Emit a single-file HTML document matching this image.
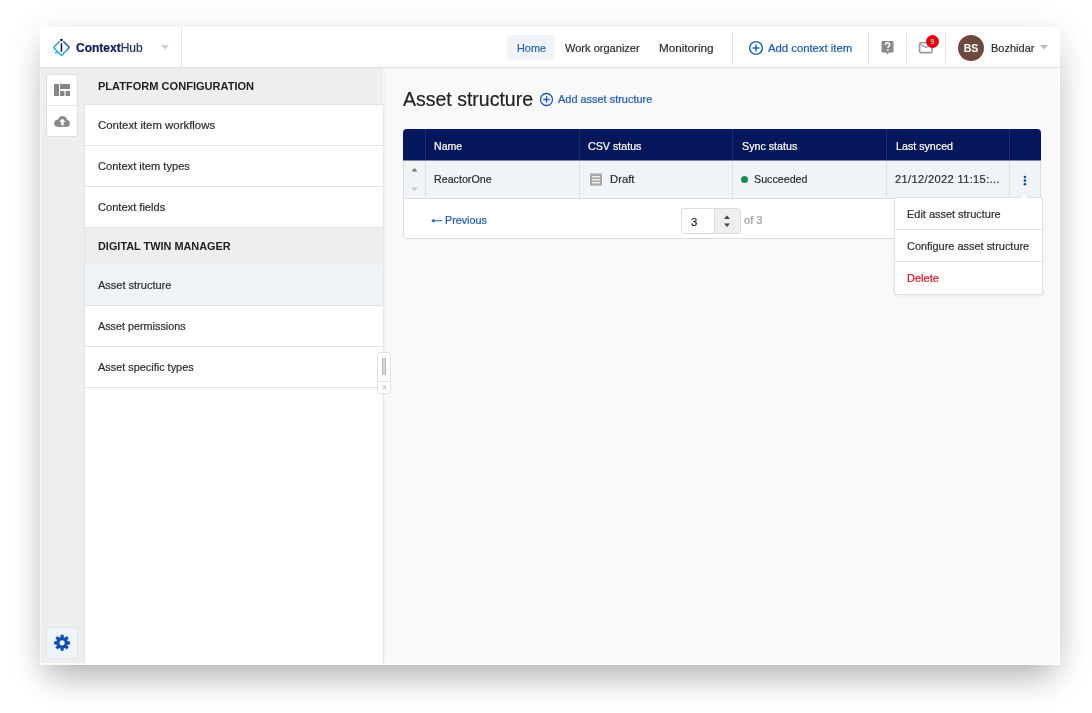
<!DOCTYPE html>
<html><head><meta charset="utf-8">
<style>
*{box-sizing:border-box;margin:0;padding:0}
html,body{width:1092px;height:713px;overflow:hidden;background:#fff;font-family:"Liberation Sans",sans-serif;color:#2a2d31}
.a{position:absolute}
.t{position:absolute;will-change:transform;-webkit-text-stroke:0.2px currentColor;white-space:nowrap;font-size:11.3px;line-height:14px}
.hl{position:absolute;height:1px;background:#e2e2e2}
.vl{position:absolute;width:1px;background:#e2e2e2}
</style></head><body>
<!-- window -->
<div class="a" style="left:40px;top:27px;width:1020px;height:638px;background:#f9f9f9;box-shadow:0 8px 32px rgba(0,0,0,0.15),0 22px 32px -10px rgba(0,0,0,0.2)"></div>

<!-- header -->
<div class="a" style="left:40px;top:27px;width:1020px;height:40px;background:#fff"></div>
<div class="hl" style="left:40px;top:67px;width:1020px;background:#e0e0e0"></div>
<div class="vl" style="left:181px;top:27px;height:40px"></div>

<!-- logo -->
<svg class="a" style="left:50px;top:36px" width="24" height="24" viewBox="0 0 24 24">
  <defs><linearGradient id="lg" x1="0.35" y1="0.75" x2="0.95" y2="0.15"><stop offset="0.35" stop-color="#1fa8e2"/><stop offset="1" stop-color="#1a3aa6"/></linearGradient></defs>
  <path d="M9.2 5.7 L4.2 10.7 Q3.45 11.45 4.2 12.2 L10.7 18.7 Q11.45 19.45 12.2 18.7 L18.7 12.2 Q19.45 11.45 18.7 10.7 L13.7 5.7" fill="none" stroke="url(#lg)" stroke-width="1.55" stroke-linecap="round" stroke-linejoin="round"/>
  <path d="M4.9 17.7 L5.9 15.2 L7.9 17.1 Z" fill="#1fa8e2"/>
  <rect x="10.7" y="7.2" width="1.5" height="8.6" fill="#130f4e"/>
  <circle cx="11.45" cy="4.0" r="1.35" fill="#130f4e"/>
</svg>
<div class="t" style="left:76px;top:41px;font-size:12px;color:#15195c;letter-spacing:0px"><b>Context</b><span style="color:#283070">Hub</span></div>
<svg class="a" style="left:161px;top:45px" width="8" height="5"><path d="M0 0 L8 0 L4 4.5 Z" fill="#d0d0d0"/></svg>

<!-- nav -->
<div class="a" style="left:507px;top:35px;width:48px;height:25px;background:#f0f4f9;border-radius:3px"></div>
<div class="t" style="left:516.5px;top:41px;color:#2062b8;font-size:10.9px">Home</div>
<div class="t" style="left:565px;top:41px;color:#2a2d31;font-size:11.05px">Work organizer</div>
<div class="t" style="left:659px;top:41px;color:#2a2d31;font-size:11.7px">Monitoring</div>
<div class="vl" style="left:732px;top:32px;height:31px"></div>
<svg class="a" style="left:748px;top:40px" width="16" height="16" viewBox="0 0 16 16"><circle cx="8" cy="8" r="6.4" fill="none" stroke="#1c5bb5" stroke-width="1.4"/><path d="M8 4.6V11.4M4.6 8H11.4" stroke="#1c5bb5" stroke-width="1.4"/></svg>
<div class="t" style="left:767.5px;top:41px;color:#1c5bb5;font-size:11.3px">Add context item</div>
<div class="vl" style="left:868px;top:32px;height:31px"></div>
<svg class="a" style="left:880px;top:40px" width="15" height="16" viewBox="0 0 15 16"><path d="M2.5 1 H12.5 Q13.5 1 13.5 2 V11.5 Q13.5 12.5 12.5 12.5 H9 L7.5 14.5 L6 12.5 H2.5 Q1.5 12.5 1.5 11.5 V2 Q1.5 1 2.5 1 Z" fill="#8a8a8a"/><path d="M5.4 4.9 Q5.4 2.7 7.5 2.7 Q9.6 2.7 9.6 4.7 Q9.6 5.9 8.4 6.5 Q7.9 6.9 7.9 7.9" fill="none" stroke="#fff" stroke-width="1.5"/><rect x="7" y="9.3" width="1.6" height="1.6" fill="#fff"/></svg>
<div class="vl" style="left:906px;top:32px;height:31px"></div>
<svg class="a" style="left:918px;top:41px" width="16" height="13" viewBox="0 0 16 13"><rect x="1.6" y="1.7" width="12.6" height="9.9" rx="1.3" fill="none" stroke="#979797" stroke-width="1.6"/><path d="M2.4 3.2 L7.9 6.6 L13.4 3.2" fill="none" stroke="#979797" stroke-width="1.3"/></svg>
<div class="a" style="left:926px;top:35px;width:13px;height:13px;border-radius:50%;background:#e3000f;color:#fff;font-size:7px;line-height:13px;text-align:center;will-change:transform">9</div>
<div class="vl" style="left:945px;top:32px;height:31px"></div>
<div class="a" style="left:958px;top:35px;width:26px;height:26px;border-radius:50%;background:#6e4a3e;color:#fff;font-size:10.6px;font-weight:bold;line-height:26px;text-align:center;will-change:transform">BS</div>
<div class="t" style="left:991px;top:41px;color:#2a2d31;font-size:11px">Bozhidar</div>
<svg class="a" style="left:1040px;top:45px" width="8" height="5"><path d="M0 0 L8 0 L4 4.5 Z" fill="#bdbdbd"/></svg>

<!-- icon sidebar -->
<div class="a" style="left:40px;top:68px;width:44px;height:597px;background:#eeeeee"></div>
<div class="a" style="left:46px;top:74px;width:32px;height:63px;background:#fff;border:1px solid #e0e0e0;border-radius:3px"></div>
<div class="hl" style="left:47px;top:105px;width:30px"></div>
<svg class="a" style="left:54px;top:84px" width="16" height="12" viewBox="0 0 16 12"><rect x="0" y="0" width="5" height="12" fill="#858585"/><rect x="6" y="0" width="10" height="5" fill="#858585"/><rect x="6" y="7" width="4.4" height="5" fill="#858585"/><rect x="11.6" y="7" width="4.4" height="5" fill="#858585"/></svg>
<svg class="a" style="left:53px;top:114px" width="18" height="14" viewBox="0 0 18 14"><g fill="#8a8a8a"><circle cx="9.5" cy="6.7" r="4.7"/><circle cx="4.7" cy="9.3" r="3.5"/><circle cx="13.4" cy="9.4" r="3.45"/><rect x="4.7" y="8" width="8.7" height="4.85"/></g><path d="M9.35 4.5 L12.6 8.1 H10.65 V11.2 H8.05 V8.1 H6.1 Z" fill="#fff"/></svg>
<div class="a" style="left:46px;top:627px;width:32px;height:32px;background:#eef4f9;border:1px solid #e2e6ea;border-radius:3px"></div>
<svg class="a" style="left:52px;top:633px" width="20" height="20" viewBox="-10 -10 20 20"><g transform="translate(0.1 -0.2)" fill="#0f4eb0"><rect x="-1.6" y="-8" width="3.2" height="4" rx="0.4" transform="rotate(0)"/><rect x="-1.6" y="-8" width="3.2" height="4" rx="0.4" transform="rotate(45)"/><rect x="-1.6" y="-8" width="3.2" height="4" rx="0.4" transform="rotate(90)"/><rect x="-1.6" y="-8" width="3.2" height="4" rx="0.4" transform="rotate(135)"/><rect x="-1.6" y="-8" width="3.2" height="4" rx="0.4" transform="rotate(180)"/><rect x="-1.6" y="-8" width="3.2" height="4" rx="0.4" transform="rotate(225)"/><rect x="-1.6" y="-8" width="3.2" height="4" rx="0.4" transform="rotate(270)"/><rect x="-1.6" y="-8" width="3.2" height="4" rx="0.4" transform="rotate(315)"/><circle r="5.9"/><circle r="2.6" fill="#eef4f9"/></g></svg>

<!-- panel -->
<div class="a" style="left:84px;top:104px;width:300px;height:561px;background:#fff;border-left:1px solid #e2e2e2;border-right:1px solid #e6e6e6"></div>
<div class="vl" style="left:384px;top:68px;height:597px;background:#f2f2f2"></div>
<div class="a" style="left:84px;top:68px;width:299px;height:36px;background:#eeeeee"></div>
<div class="t" style="left:98px;top:79px;font-weight:bold;font-size:11.05px;color:#222;-webkit-text-stroke:0">PLATFORM CONFIGURATION</div>
<div class="hl" style="left:84px;top:104px;width:299px"></div>
<div class="t" style="left:98px;top:118px;font-size:11.4px">Context item workflows</div>
<div class="hl" style="left:84px;top:145px;width:299px"></div>
<div class="t" style="left:98px;top:159px;font-size:11.1px">Context item types</div>
<div class="hl" style="left:84px;top:186px;width:299px"></div>
<div class="t" style="left:98px;top:200px;font-size:11.1px">Context fields</div>
<div class="hl" style="left:84px;top:227px;width:299px"></div>
<div class="a" style="left:85px;top:228px;width:298px;height:37px;background:#eeeeee"></div>
<div class="t" style="left:98px;top:239px;font-weight:bold;font-size:10.9px;color:#222;-webkit-text-stroke:0">DIGITAL TWIN MANAGER</div>
<div class="a" style="left:85px;top:265px;width:298px;height:40px;background:#eff4f9"></div>
<div class="t" style="left:98px;top:278px;font-size:11px">Asset structure</div>
<div class="hl" style="left:84px;top:305px;width:299px"></div>
<div class="t" style="left:98px;top:319px;font-size:10.8px">Asset permissions</div>
<div class="hl" style="left:84px;top:346px;width:299px"></div>
<div class="t" style="left:98px;top:360px;font-size:10.9px">Asset specific types</div>
<div class="hl" style="left:84px;top:387px;width:299px"></div>
<!-- handle -->
<div class="a" style="left:377px;top:352px;width:14px;height:42px;background:#fff;border:1px solid #e4e4e4;border-radius:3px"></div>
<div class="hl" style="left:378px;top:381px;width:12px"></div>
<div class="a" style="left:382px;top:358px;width:4px;height:17px;background:#d6d6d6;border-left:1px solid #b9b9b9;border-right:1px solid #b9b9b9"></div>
<svg class="a" style="left:381px;top:384px" width="7" height="7"><path d="M1.4 1.2L5.4 5.4M5.4 1.2L1.4 5.4" stroke="#aaa" stroke-width="0.9"/></svg>
<!-- main -->
<div class="t" style="left:403px;top:87px;font-size:19.5px;line-height:24px;color:#222">Asset structure</div>
<svg class="a" style="left:539px;top:92px" width="15" height="15" viewBox="0 0 15 15"><circle cx="7.5" cy="7.5" r="6" fill="none" stroke="#1c5bb5" stroke-width="1.3"/><path d="M7.5 4.3V10.7M4.3 7.5H10.7" stroke="#1c5bb5" stroke-width="1.3"/></svg>
<div class="t" style="left:558px;top:92px;color:#1c5bb5;font-size:10.95px">Add asset structure</div>

<!-- table -->
<div class="a" style="left:403px;top:129px;width:638px;height:110px;background:#fff;border:1px solid #dcdcdc;border-radius:4px"></div>
<div class="a" style="left:403px;top:129px;width:638px;height:31px;background:#03175a;border-radius:4px 4px 0 0"></div>
<div class="a" style="left:404px;top:160px;width:636px;height:38px;background:#f0f4f9"></div>
<div class="hl" style="left:403px;top:160px;width:638px;background:#7d879e"></div>
<div class="hl" style="left:404px;top:198px;width:636px;background:#dcdcdc"></div>
<div class="vl" style="left:425px;top:129px;height:31px;background:#1d2f6a"></div>
<div class="vl" style="left:579px;top:129px;height:31px;background:#1d2f6a"></div>
<div class="vl" style="left:732px;top:129px;height:31px;background:#1d2f6a"></div>
<div class="vl" style="left:886px;top:129px;height:31px;background:#1d2f6a"></div>
<div class="vl" style="left:1009px;top:129px;height:31px;background:#1d2f6a"></div>
<div class="vl" style="left:425px;top:161px;height:37px;background:#dde1e6"></div>
<div class="vl" style="left:579px;top:161px;height:37px;background:#dde1e6"></div>
<div class="vl" style="left:732px;top:161px;height:37px;background:#dde1e6"></div>
<div class="vl" style="left:886px;top:161px;height:37px;background:#dde1e6"></div>
<div class="vl" style="left:1009px;top:161px;height:37px;background:#dde1e6"></div>
<div class="t" style="left:434px;top:139px;color:#fff;font-size:10.6px">Name</div>
<div class="t" style="left:588px;top:139px;color:#fff;font-size:10.7px">CSV status</div>
<div class="t" style="left:742px;top:139px;color:#fff;font-size:10.7px">Sync status</div>
<div class="t" style="left:896px;top:139px;color:#fff;font-size:10.7px">Last synced</div>
<svg class="a" style="left:411px;top:167px" width="7" height="25"><path d="M0.5 4.5 L3.5 1 L6.5 4.5Z" fill="#7a7a7a"/><path d="M0.5 20.5 L3.5 24 L6.5 20.5Z" fill="#c6c6c6"/></svg>
<div class="t" style="left:434px;top:172px;font-size:10.7px">ReactorOne</div>
<svg class="a" style="left:590px;top:173px" width="12" height="13" viewBox="0 0 12 13"><rect x="0" y="0.3" width="12" height="12.5" fill="#a9a9a9"/><path d="M0 0.3h12M0 12.7h12" stroke="#f0f4f9" stroke-width="0.6" stroke-dasharray="1 1"/><rect x="2" y="3.1" width="8" height="1.3" fill="#f4f4f4"/><rect x="2" y="6.1" width="8" height="1.3" fill="#f4f4f4"/><rect x="2" y="9.1" width="8" height="1.3" fill="#f4f4f4"/></svg>
<div class="t" style="left:610px;top:172px;font-size:11.3px">Draft</div>
<div class="a" style="left:741px;top:176px;width:7px;height:7px;border-radius:50%;background:#1a8a4e"></div>
<div class="t" style="left:754px;top:172px;font-size:10.7px">Succeeded</div>
<div class="t" style="left:895px;top:172px;font-size:11.1px;letter-spacing:0.35px">21/12/2022 11:15:...</div>
<svg class="a" style="left:1022px;top:175px" width="6" height="11"><circle cx="2.9" cy="1.95" r="1.3" fill="#0d4aa8"/><circle cx="2.9" cy="5.6" r="1.3" fill="#0d4aa8"/><circle cx="2.9" cy="9.25" r="1.3" fill="#0d4aa8"/></svg>
<!-- pagination -->
<svg class="a" style="left:430px;top:217px" width="13" height="8"><path d="M2.5 3.75H12" stroke="#1c5bb5" stroke-width="1"/><path d="M1 3.75L4.4 1.8V5.7Z" fill="#1c5bb5"/></svg>
<div class="t" style="left:445px;top:213px;color:#1c5bb5;font-size:10.75px">Previous</div>
<div class="a" style="left:681px;top:208px;width:60px;height:26px;background:#fff;border:1px solid #dcdcdc;border-radius:3px"></div>
<div class="a" style="left:714px;top:209px;width:26px;height:24px;background:#eeeeee;border-left:1px solid #dcdcdc"></div>
<div class="t" style="left:691px;top:215px;color:#222">3</div>
<svg class="a" style="left:723px;top:214px" width="8" height="15"><path d="M1 5 L4 1.5 L7 5Z" fill="#444"/><path d="M1 9.5 L4 13 L7 9.5Z" fill="#444"/></svg>
<div class="t" style="left:744px;top:213px;color:#999;font-size:11.1px">of 3</div>

<!-- dropdown -->
<div class="a" style="left:894px;top:197px;width:149px;height:98px;background:#fff;border:1px solid #dde1e6;border-radius:3px;box-shadow:0 1px 3px rgba(0,0,0,0.08)"></div>
<svg class="a" style="left:1018px;top:191px" width="12" height="8"><path d="M0.5 7 L6 1.5 L11.5 7" fill="#fff" stroke="#dcdcdc" stroke-width="1"/></svg>
<div class="hl" style="left:895px;top:229px;width:147px"></div>
<div class="hl" style="left:895px;top:261px;width:147px"></div>
<div class="t" style="left:907px;top:207px;color:#2a2d31;font-size:10.95px">Edit asset structure</div>
<div class="t" style="left:907px;top:239px;color:#2a2d31;font-size:10.95px">Configure asset structure</div>
<div class="t" style="left:907px;top:271px;color:#e0101e;font-size:11.05px">Delete</div>
<!-- window edge highlights -->
<div class="a" style="left:40px;top:68px;width:1px;height:597px;background:rgba(255,255,255,0.45)"></div>
<div class="a" style="left:1058px;top:68px;width:2px;height:597px;background:rgba(255,255,255,0.75)"></div>
<div class="a" style="left:40px;top:663px;width:1020px;height:2px;background:rgba(255,255,255,0.65)"></div>
</body></html>
